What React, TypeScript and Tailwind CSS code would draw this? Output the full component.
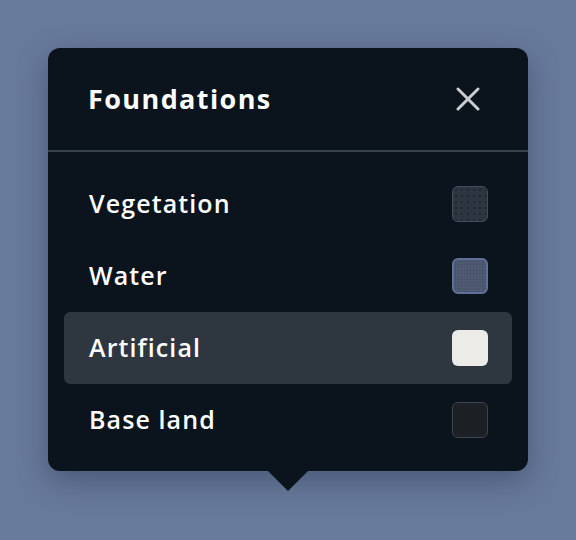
const layers = [
  {
    name: "Vegetation",
    swatch:
      "bg-[#2d3540] border border-[#444d5a] bg-[radial-gradient(#1f2630_0.7px,transparent_1px)] bg-[length:6px_6px]",
  },
  {
    name: "Water",
    swatch:
      "bg-[#4d5a72] border-2 border-[#5f719a] bg-[radial-gradient(#3f4a5e_0.7px,transparent_1px)] bg-[length:3px_3px]",
  },
  { name: "Artificial", swatch: "bg-[#ecebe7]", active: true },
  { name: "Base land", swatch: "bg-[#1c1f24] border border-[#3d4553]" },
];

function App() {
  return (
    <div className="flex h-[540px] w-[576px] justify-center bg-[#687a9c] pt-12 font-['Open_Sans',sans-serif]">
      <div className="relative h-[423px] w-[480px] rounded-xl bg-[#0b131d] shadow-[0_10px_30px_rgba(15,25,45,0.35)]">
        {/* header */}
        <div className="flex h-[104px] items-center justify-between border-b-2 border-[#384350] pl-10 pr-12">
          <h2 className="text-[27px] font-bold tracking-[1.4px] text-white">Foundations</h2>
          <svg width="24" height="24" viewBox="0 0 24 24" className="text-[#c9ccd1]">
            <path d="M2 2L22 22M22 2L2 22" stroke="currentColor" strokeWidth="3" strokeLinecap="round" />
          </svg>
        </div>

        {/* rows */}
        <div className="flex flex-col px-4 pt-4">
          {layers.map((l) => (
            <div
              key={l.name}
              className={
                "flex h-[72px] items-center justify-between rounded-md pl-[25px] pr-6 " +
                (l.active ? "bg-[#2e3640]" : "")
              }
            >
              <span className="text-[25px] font-semibold tracking-[1.1px] text-white">{l.name}</span>
              <div className={"h-9 w-9 rounded-md " + l.swatch} />
            </div>
          ))}
        </div>

        {/* pointer */}
        <div className="absolute left-1/2 top-full h-0 w-0 -translate-x-1/2 border-x-[20px] border-t-[20px] border-x-transparent border-t-[#0b131d]" />
      </div>
    </div>
  );
}

export default App;
